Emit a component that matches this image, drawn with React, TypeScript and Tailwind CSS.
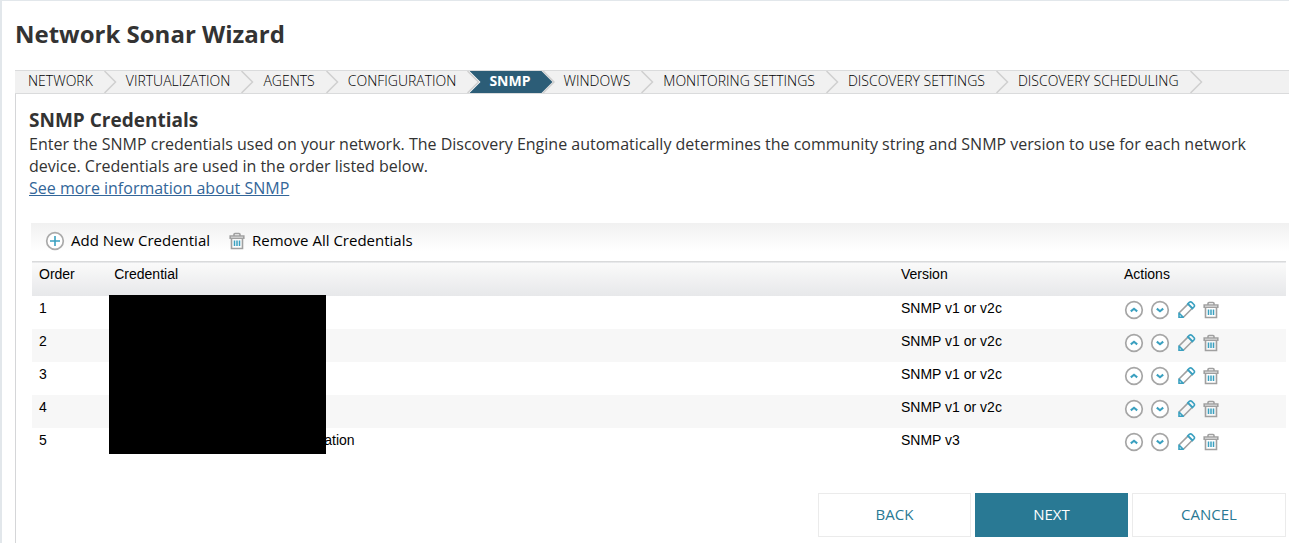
import clsx from "clsx";

const steps = [
  "Network",
  "Virtualization",
  "Agents",
  "Configuration",
  "SNMP",
  "Windows",
  "Monitoring Settings",
  "Discovery Settings",
  "Discovery Scheduling",
];

const activeStep = "SNMP";

const credentials = [
  { order: 1, name: "", version: "SNMP v1 or v2c" },
  { order: 2, name: "", version: "SNMP v1 or v2c" },
  { order: 3, name: "", version: "SNMP v1 or v2c" },
  { order: 4, name: "", version: "SNMP v1 or v2c" },
  { order: 5, name: "ation", version: "SNMP v3" },
];

const AddIcon = () => (
  <svg className="size-5" viewBox="0 0 20 20" fill="none" aria-hidden="true">
    <circle cx="10" cy="10" r="8.3" fill="#fff" stroke="#aaa" strokeWidth="1.7" />
    <path d="M10 5v10M5 10h10" stroke="#3aa0c0" strokeWidth="1.6" />
  </svg>
);

const TrashIcon = () => (
  <svg className="h-5 w-[18px]" viewBox="-1 0 18 20" fill="none" aria-hidden="true">
    <path
      d="M2.5 7.5v10h11v-10M1.2 5h13.6v2.3H1.2zM5 4.8V3.5c0-.6.4-1 1-1h4c.6 0 1 .4 1 1v1.3"
      stroke="#a0a0a0"
      strokeWidth="1.6"
    />
    <path d="M5.5 9.5V15M8 9.5V15M10.5 9.5V15" stroke="#3aa0c0" strokeWidth="1.5" />
  </svg>
);

const ArrowIcon = ({ down = false }: { down?: boolean }) => (
  <svg className="size-5" viewBox="0 0 20 20" fill="none" aria-hidden="true">
    <circle cx="10" cy="10" r="8.3" fill="#fff" stroke="#a6a6a6" strokeWidth="1.7" />
    <path
      d={down ? "M6.8 8.6l3.2 2.6 3.2-2.6" : "M6.8 11.4l3.2-2.6 3.2 2.6"}
      stroke="#3aa0c0"
      strokeWidth="2.1"
    />
  </svg>
);

const PencilIcon = () => (
  <svg className="size-5" viewBox="0 0 20 20" fill="none" aria-hidden="true">
    <path d="M3 13L12.4 3.6M7.4 17.2L16.8 7.8" stroke="#a0a0a0" strokeWidth="1.6" />
    <path
      d="M3 12.4v4.9h4.9M3 13l4.2 4.2M11.8 3.9l1.5-1.5c.8-.7 1.8-.7 2.5 0l2.1 2.1c.7.7.7 1.7 0 2.5l-1.5 1.5zM12.6 4.3l3.6 3.6"
      stroke="#3aa0c0"
      strokeWidth="1.6"
    />
  </svg>
);

const StepArrow = ({ active, beforeActive }: { active: boolean; beforeActive: boolean }) => (
  <svg
    className={clsx("h-[22px] w-[14px] shrink-0", beforeActive && "bg-[#2c5d77]")}
    viewBox="0 0 14 22"
    fill="none"
    aria-hidden="true"
  >
    {beforeActive && <path d="M0 0h2.5l11 11-11 11H0z" fill="#fff" />}
    <path d="M0 0h.5l11 11-11 11H0z" fill={active ? "#2c5d77" : "#f1f1f1"} />
    <path
      d={active ? "M2 0l11 11L2 22" : "M.5 0l11 11-11 11"}
      stroke="#cfcfcf"
      strokeWidth="1.5"
    />
  </svg>
);

const Steps = () => (
  <nav aria-label="Wizard steps" className="border-y border-[#dadbdc] bg-[#f1f1f1]">
    <ol className="flex h-[22px] text-sm leading-5 font-light text-black uppercase">
      {steps.map((step, i) => {
        const active = step === activeStep;
        return (
          <li
            key={step}
            className="flex shrink-0"
            aria-current={active ? "step" : undefined}
          >
            <span
              className={clsx(
                "pr-[11px]",
                i === 0 ? "pl-[13px]" : "pl-2",
                active && "bg-[#2c5d77] font-bold text-white"
              )}
            >
              {step}
            </span>
            <StepArrow active={active} beforeActive={steps[i + 1] === activeStep} />
          </li>
        );
      })}
    </ol>
  </nav>
);

const CredentialTable = () => (
  <div className="relative mr-[3px] ml-px font-['Liberation_Sans',sans-serif] text-sm leading-5 text-black">
    <table className="w-full table-fixed border-collapse text-left">
      <thead>
        <tr className="h-[34px] border-t border-[#d9dadb] bg-linear-to-b from-[#fafafa] to-[#e7e8ea] align-top">
          <th className="w-[6%] pt-[2px] pl-[7px] font-normal">Order</th>
          <th className="pt-[2px] pl-[7px] font-normal">Credential</th>
          <th className="w-[223px] pt-[2px] pl-[7px] font-normal">Version</th>
          <th className="w-[169px] pt-[2px] pl-[7px] font-normal">Actions</th>
        </tr>
      </thead>
      <tbody>
        {credentials.map(({ order, name, version }) => (
          <tr key={order} className="h-[33px] align-top even:bg-[#f7f7f7]">
            <td className="pt-[2px] pl-[7px]">{order}</td>
            <td className="pt-[2px] pl-[217px]">{name}</td>
            <td className="pt-[2px] pl-[7px]">{version}</td>
            <td className="pt-1 pl-[7px]">
              <div className="flex gap-[6px]">
                <button type="button" aria-label="Move up">
                  <ArrowIcon />
                </button>
                <button type="button" aria-label="Move down">
                  <ArrowIcon down />
                </button>
                <button type="button" aria-label="Edit">
                  <PencilIcon />
                </button>
                <button type="button" aria-label="Delete">
                  <TrashIcon />
                </button>
              </div>
            </td>
          </tr>
        ))}
      </tbody>
    </table>
    {/* credential names are blacked out */}
    <div className="absolute top-[34px] left-[77px] h-[159px] w-[217px] bg-black" />
  </div>
);

export default function App() {
  return (
    <main className="min-h-screen border-t border-l-2 border-[#e2e7eb] bg-white pl-[13px] font-['Open_Sans',sans-serif] text-[#333]">
      <h1 className="pt-4 pb-5 text-2xl leading-[33px] font-bold">Network Sonar Wizard</h1>
      <Steps />
      <section className="min-h-[449px] border-l border-[#d5d6d8]">
        <div className="px-[13px] pt-[13px]">
          <h2 className="text-[19px] leading-[26px] font-bold">SNMP Credentials</h2>
          <p className="text-base leading-[22px]">
            Enter the SNMP credentials used on your network. The Discovery Engine automatically
            determines the community string and SNMP version to use for each network device.
            Credentials are used in the order listed below.
          </p>
          <a
            href="#snmp"
            className="block w-fit text-base leading-[22px] text-[#336699] underline"
          >
            See more information about SNMP
          </a>
        </div>
        <div className="mt-6 ml-[15px]">
          <div className="flex h-[35px] items-center gap-[18px] bg-linear-to-b from-[#f1f1f1] to-white to-80% pl-[14px] text-[15px] text-black">
            <button type="button" className="flex items-center gap-[6px]">
              <AddIcon />
              Add New Credential
            </button>
            <button type="button" className="flex items-center gap-[6px]">
              <TrashIcon />
              Remove All Credentials
            </button>
          </div>
          <div className="mt-[3px]">
            <CredentialTable />
          </div>
          <div className="mt-8 mr-[3px] flex justify-end gap-1 text-[15px] text-[#297994]">
            <button type="button" className="h-11 w-[153px] border border-[#ebebeb]">
              BACK
            </button>
            <button type="button" className="h-11 w-[153px] bg-[#297994] text-white">
              NEXT
            </button>
            <button type="button" className="h-11 w-[154px] border border-[#ebebeb]">
              CANCEL
            </button>
          </div>
        </div>
      </section>
    </main>
  );
}
